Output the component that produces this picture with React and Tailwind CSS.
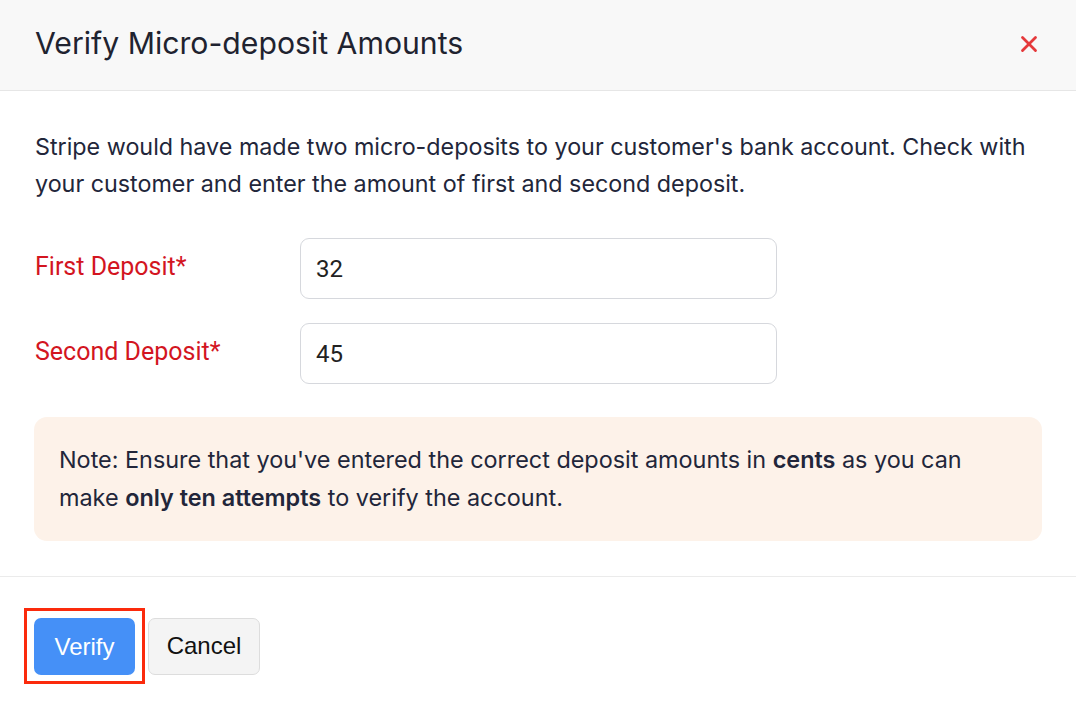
import { X } from 'lucide-react';

function DepositRow({ label, value }) {
  return (
    <div className="flex items-center">
      <label className="w-[265px] shrink-0 text-[25px] text-[#d3151f] font-['Roboto',sans-serif] -mt-[4px]">{label}</label>
      <input
        defaultValue={value}
        className="w-[477px] h-[61px] px-[15px] rounded-[9px] border border-[#d6d8dd] bg-white text-[24px] text-[#222] font-['Roboto',sans-serif] outline-none"
      />
    </div>
  );
}

export default function App() {
  return (
    <div className="w-[1076px] h-[712px] bg-white font-['Inter',sans-serif] text-[#22263a] overflow-hidden">
      {/* Header */}
      <div className="h-[91px] flex items-center justify-between pl-[35px] pr-[34px] bg-[#f8f8f8] border-b border-[#e6e6e6]">
        <h1 className="text-[30.2px] text-[#1f2330] -mt-[2px]">Verify Micro-deposit Amounts</h1>
        <X size={26} strokeWidth={2.6} className="text-[#e5393b] -mt-[3px]" />
      </div>

      {/* Body */}
      <div className="px-[34px] pt-[37px] pb-[35px] border-b border-[#ebebeb]">
        <p className="text-[23.3px] leading-[37px] pl-[1px]">
          Stripe would have made two micro-deposits to your customer's bank account. Check with your customer and enter the amount of first and second deposit.
        </p>
        <div className="mt-[36px] flex flex-col gap-[24px] pl-[1px]">
          <DepositRow label="First Deposit*" value="32" />
          <DepositRow label="Second Deposit*" value="45" />
        </div>
        <div className="mt-[33px] rounded-[13px] bg-[#fdf2e9] px-[25px] py-[24px] text-[23.4px] leading-[38px]">
          Note: Ensure that you've entered the correct deposit amounts in <b className="font-semibold">cents</b> as you can make <b className="font-semibold">only ten attempts</b> to verify the account.
        </div>
      </div>

      {/* Footer */}
      <div className="flex items-center pl-[24px] pt-[31px] gap-[3px]">
        <div className="border-[3px] border-[#fb2a0c] px-[7px] pt-[7px] pb-[6px]">
          <button className="w-[101px] h-[57px] rounded-[7px] bg-[#4590f7] text-white text-[24px] font-['Liberation_Sans',sans-serif]">
            Verify
          </button>
        </div>
        <button className="w-[112px] h-[57px] rounded-[7px] bg-[#f4f4f4] border border-[#dddddd] text-[#111] text-[24px] font-['Liberation_Sans',sans-serif]">
          Cancel
        </button>
      </div>
    </div>
  );
}
